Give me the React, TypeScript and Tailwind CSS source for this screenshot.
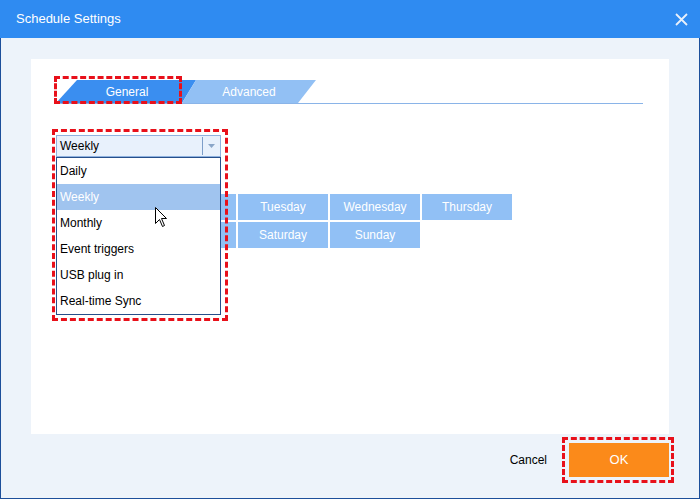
import React from "react";

const days = [
  ["Monday", "Tuesday", "Wednesday", "Thursday"],
  ["Friday", "Saturday", "Sunday"],
];

const options = ["Daily", "Weekly", "Monthly", "Event triggers", "USB plug in", "Real-time Sync"];

const Cursor = () => (
  <svg width="13" height="21" viewBox="0 0 13 21" className="absolute left-[99px] top-[72px]">
    <path d="M0.5 0.5 L0.5 16.5 L4.5 12.5 L7.5 19.5 L9.5 18.5 L6.5 11.5 L11.5 11.5 Z" fill="#fff" stroke="#000" strokeWidth="1" />
  </svg>
);

export default function App() {
  return (
    <div className="w-[700px] h-[499px] flex flex-col font-['Liberation_Sans',Arial,sans-serif] text-[12px] text-black overflow-hidden">
      {/* title bar */}
      <div className="h-[38px] bg-[#2f8bf1] flex items-center justify-between pl-[16px] pr-[12px] text-white">
        <span className="text-[13px]">Schedule Settings</span>
        <svg width="13" height="13" viewBox="0 0 13 13">
          <path d="M1 1 L12 12 M12 1 L1 12" stroke="#e8f0fb" strokeWidth="1.8" />
        </svg>
      </div>

      {/* body */}
      <div className="flex-1 flex flex-col bg-[#edf3fa] border-x border-b border-[#1d4f9a]">
        <div className="mt-[21px] ml-[30px] mr-[30px] h-[375px] bg-white pt-[21px] pl-[25px] relative">
          {/* tabs */}
          <div className="w-[587px] h-[24px] flex border-b border-[#8ab4e8]">
            <div className="relative w-[140px] h-[23px]">
              <div className="w-full h-full bg-[#3a8ef0] text-white flex items-center justify-center pl-[2px] [clip-path:polygon(21px_0,140px_0,126px_23px,0_23px)]">
                General
              </div>
              <div className="absolute left-[-2px] top-[-4px] w-[128px] h-[28px] border-[3px] border-dashed border-[#e8101a]" />
            </div>
            <div className="w-[134px] h-[23px] -ml-[14px] bg-[#92c0f4] text-white flex items-center justify-center [clip-path:polygon(14px_0,134px_0,116px_23px,0_23px)]">
              Advanced
            </div>
          </div>

          {/* combo + days */}
          <div className="relative mt-[31px]">
            <div className="w-[165px] h-[22px] bg-[#e8f1fc] border border-[#8fb2df] flex items-center">
              <span className="flex-1 pl-[3px]">Weekly</span>
              <div className="w-px h-[18px] bg-[#7d9ec9]" />
              <div className="w-[17px] flex justify-center">
                <svg width="7" height="4" viewBox="0 0 7 4">
                  <path d="M0 0 L7 0 L3.5 4 Z" fill="#8aa6c8" />
                </svg>
              </div>
            </div>

            <div className="ml-[90px] mt-[37px] flex flex-col gap-[2px]">
              {days.map((row, i) => (
                <div key={i} className="flex gap-[2px]">
                  {row.map((d) => (
                    <div key={d} className="w-[90px] h-[26px] bg-[#91c0f5] text-white flex items-center justify-center">
                      {d}
                    </div>
                  ))}
                </div>
              ))}
            </div>

            {/* dropdown list */}
            <div className="absolute left-0 top-[22px] w-[165px] bg-white border border-[#264f8b]">
              {options.map((o) => (
                <div key={o} className={`h-[26px] flex items-center pl-[3px] ${o === "Weekly" ? "bg-[#a0c4ef] text-white" : ""}`}>
                  {o}
                </div>
              ))}
            </div>
            <Cursor />
            <div className="absolute left-[-4px] top-[-6px] w-[176px] h-[192px] border-[3px] border-dashed border-[#e8101a]" />
          </div>
        </div>

        {/* footer */}
        <div className="flex items-center justify-end mt-[9px] pr-[30px] gap-[22px]">
          <span className="text-[12px]">Cancel</span>
          <div className="relative">
            <div className="w-[100px] h-[34px] bg-[#fb8a1a] text-white text-[13px] flex items-center justify-center">OK</div>
            <div className="absolute -left-[7px] -right-[5px] -top-[6px] -bottom-[6px] border-[3px] border-dashed border-[#e8101a]" />
          </div>
        </div>
      </div>
    </div>
  );
}
